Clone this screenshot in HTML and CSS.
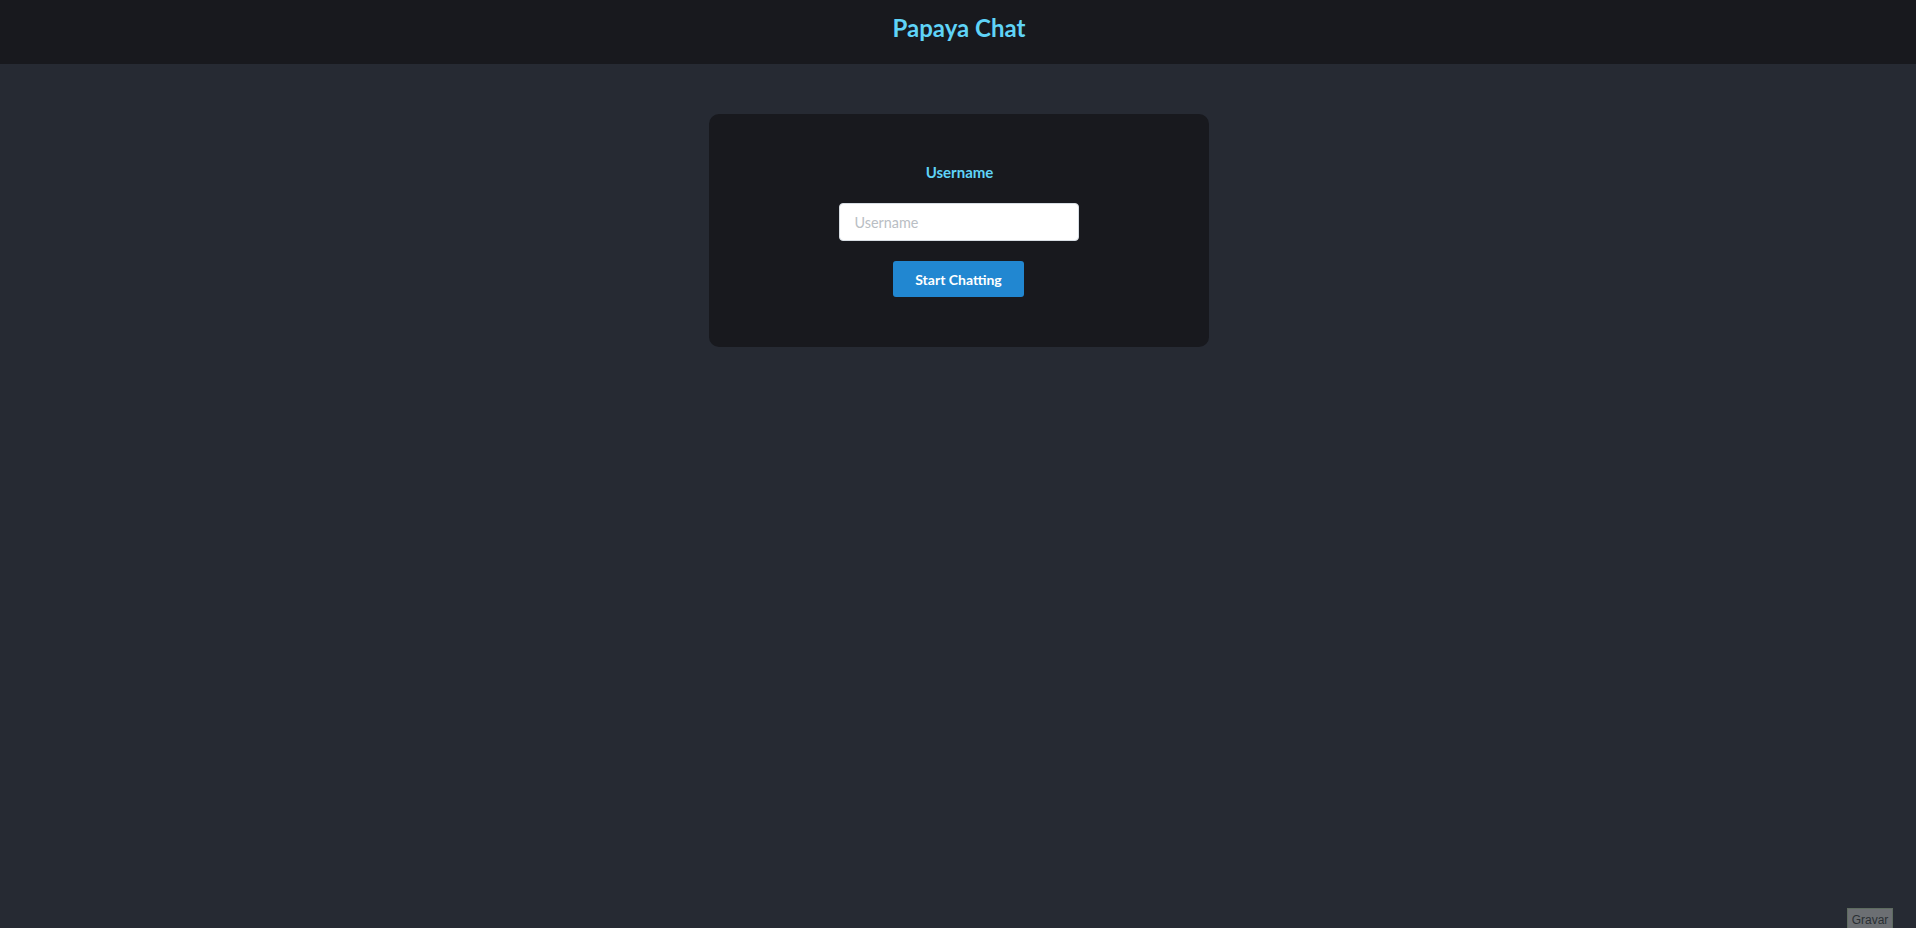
FILE: index.html
```html
<!DOCTYPE html>
<html lang="en">
<head>
<meta charset="utf-8">
<title>Papaya Chat</title>
<link rel="stylesheet" href="styles.css">
</head>
<body>
<header class="topbar">
  <h1 class="brand">Papaya Chat</h1>
</header>
<main class="content">
  <form class="login-card">
    <label class="login-label" for="username">Username</label>
    <input class="login-input" id="username" type="text" placeholder="Username">
    <button class="login-button" type="button">Start Chatting</button>
  </form>
</main>
<button class="record-button" type="button">Gravar</button>
</body>
</html>
```
FILE: styles.css
```css
* { box-sizing: border-box; }
html, body {
  margin: 0;
  padding: 0;
  height: 100%;
}
body {
  background: #262a33;
  font-family: Lato, "Open Sans", sans-serif;
  color: #fff;
}
.topbar {
  height: 64px;
  background: #18191e;
  display: flex;
  justify-content: center;
  align-items: center;
}
.brand {
  margin: 0;
  font-size: 24px;
  font-weight: 700;
  color: #5fd3f7;
  padding-bottom: 9px;
  padding-left: 2px;
}
.content {
  display: flex;
  justify-content: center;
  padding-top: 50px;
  padding-left: 1px;
}
.login-card {
  width: 500px;
  height: 233px;
  background: #18191e;
  border-radius: 10px;
  display: flex;
  flex-direction: column;
  align-items: center;
  padding-top: 49px;
}
.login-label {
  font-size: 15px;
  font-weight: 700;
  color: #5fd3f7;
  line-height: 19px;
  padding-left: 2px;
}
.login-input {
  margin-top: 21px;
  width: 240px;
  height: 38px;
  border: 1px solid #d7dde3;
  border-radius: 4px;
  padding: 0 15px;
  font-family: Lato, sans-serif;
  font-size: 14.4px;
  background: #fff;
  outline: none;
}
.login-input::placeholder {
  color: #b9bec4;
}
.login-button {
  margin-top: 20px;
  width: 131px;
  height: 36px;
  border: none;
  border-radius: 3px;
  background: #2187d1;
  color: #fff;
  font-family: Lato, sans-serif;
  font-weight: 700;
  font-size: 14px;
  cursor: pointer;
}
.record-button {
  position: fixed;
  right: 23px;
  top: 908px;
  width: 46px;
  height: 30px;
  padding: 4px 0 0;
  background: #6c6f73;
  border: 1px solid #5d6b5f;
  color: #2a2f33;
  font-family: "Liberation Sans", Arial, sans-serif;
  font-size: 12px;
  display: flex;
  justify-content: center;
  align-items: flex-start;
}
```
